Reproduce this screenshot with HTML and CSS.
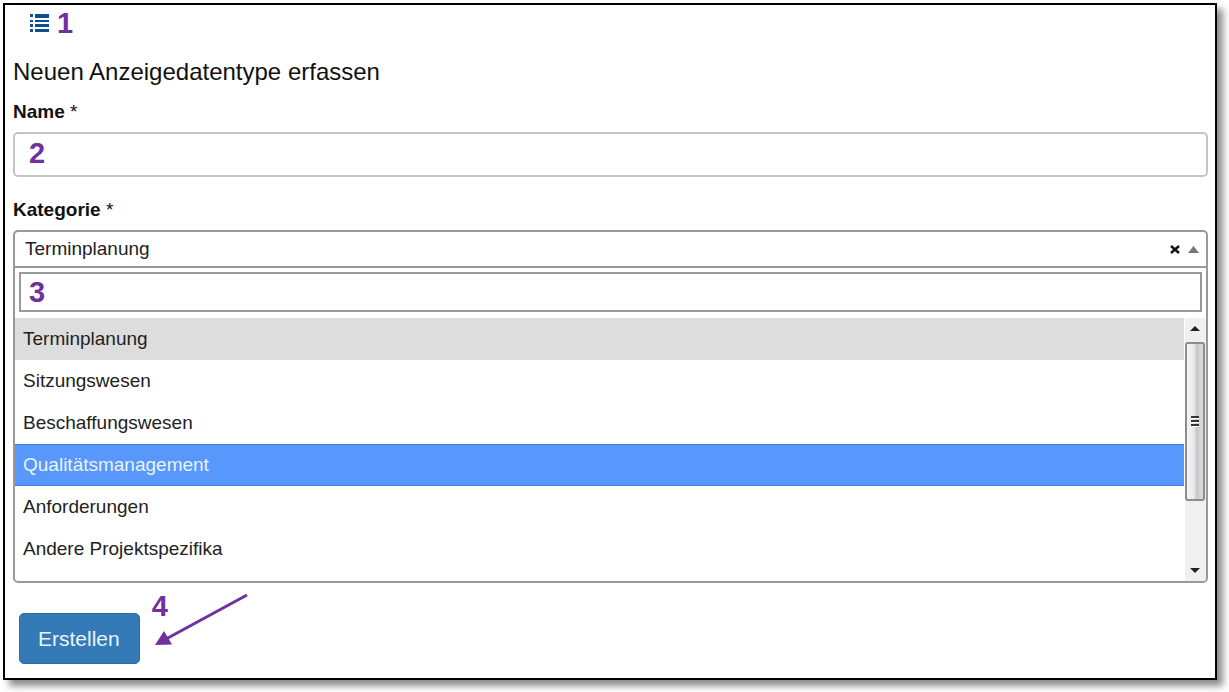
FILE: index.html
```html
<!DOCTYPE html>
<html lang="de">
<head>
<meta charset="utf-8">
<meta name="viewport" content="width=device-width, initial-scale=1">
<title>Neuen Anzeigedatentype erfassen</title>
<link rel="stylesheet" href="styles.css">
</head>
<body>
<div class="page">
<main class="frame">
  <div class="toolbar">
    <button class="list-button" type="button" aria-label="Liste">
      <svg width="20" height="18" viewBox="0 0 20 18" fill="#0d4f8f" aria-hidden="true">
        <path d="M0 0h3v3H0zM5 0h14v4H5zM0 6h3v2H0zM5 6h14v2H5zM0 10h3v3H0zM5 10h14v3H5zM0 15h3v3H0zM5 15h14v3H5z"/>
      </svg>
    </button>
    <span class="mark">1</span>
  </div>
  <h1 class="title">Neuen Anzeigedatentype erfassen</h1>
  <form class="form">
    <label class="label" for="name">Name <span class="required">*</span></label>
    <div class="field">
      <input class="text-input" id="name" type="text" required>
      <span class="mark mark-over">2</span>
    </div>

    <label class="label" for="category">Kategorie <span class="required">*</span></label>
    <div class="combo">
      <div class="combo-head">
        <select class="combo-select" id="category">
          <option selected>Terminplanung</option>
          <option>Sitzungswesen</option>
          <option>Beschaffungswesen</option>
          <option>Qualitätsmanagement</option>
          <option>Anforderungen</option>
          <option>Andere Projektspezifika</option>
        </select>
        <button class="clear" type="button" aria-label="Auswahl entfernen">
          <svg width="10" height="9" viewBox="0 0 10 9" aria-hidden="true"><path d="M1 1l8 7M9 1L1 8" fill="none" stroke="#111" stroke-width="2.500"/></svg>
        </button>
        <svg class="caret" width="11" height="7" viewBox="0 0 11 7" aria-hidden="true"><path d="M5.500 0L11 7H0z" fill="#777"/></svg>
      </div>
      <div class="search">
        <input class="search-input" type="search" aria-label="Kategorie suchen">
        <span class="mark mark-over">3</span>
      </div>
      <div class="results">
        <ul class="options" role="listbox" aria-label="Kategorie">
          <li class="option option-selected" role="option" aria-selected="true">Terminplanung</li>
          <li class="option" role="option">Sitzungswesen</li>
          <li class="option" role="option">Beschaffungswesen</li>
          <li class="option option-active" role="option">Qualitätsmanagement</li>
          <li class="option" role="option">Anforderungen</li>
          <li class="option" role="option">Andere Projektspezifika</li>
        </ul>
        <div class="scrollbar" aria-hidden="true">
          <svg class="scroll-arrow" width="20" height="24" viewBox="0 0 20 24"><path d="M10 8l5 5H5z" fill="#222"/></svg>
          <div class="thumb">
            <svg width="8" height="11" viewBox="0 0 8 11"><path d="M0 1h8M0 5h8M0 9h8" stroke="#333" stroke-width="2"/><path d="M1 2.500h7M1 6.500h7M1 10.500h7" stroke="#fff"/></svg>
          </div>
          <svg class="scroll-arrow scroll-down" width="20" height="24" viewBox="0 0 20 24"><path d="M5 11h10l-5 5z" fill="#222"/></svg>
        </div>
      </div>
    </div>

    <div class="actions">
      <button class="submit" type="submit">Erstellen</button>
      <span class="mark mark-step">4</span>
      <svg class="arrow" width="96" height="56" viewBox="152 592 96 56" aria-hidden="true">
        <path d="M247 595L166 639" stroke="#7030a0" stroke-width="3"/>
        <path d="M155 645L164 631L172 644.500Z" fill="#7030a0"/>
      </svg>
    </div>
  </form>
</main>
</div>
</body>
</html>
```
FILE: styles.css
```css
* {
  box-sizing: border-box;
}

body {
  margin: 0;
  background: #fff;
  color: #111;
  font: 19px/24px "Liberation Sans", Arial, sans-serif;
}

.page {
  min-height: 100vh;
  padding: 3px 12px 12px 3px;
  background: #fff;
}

.frame {
  padding: 4px 7px 14px 8px;
  border: 2px solid #000;
  background: #fff;
  box-shadow: 6px 6px 7px rgba(0, 0, 0, 0.45);
}

.toolbar {
  display: flex;
  align-items: center;
  gap: 7px;
  padding-left: 17px;
}

.list-button,
.clear {
  display: flex;
  padding: 0;
  border: 0;
  background: none;
}

.mark {
  color: #7030a0;
  font-size: 29px;
  font-weight: bold;
  line-height: 28px;
}

.title {
  margin: 19px 0 12px;
  font-size: 24px;
  font-weight: normal;
  line-height: 32px;
}

.label {
  display: block;
  margin-bottom: 8px;
  font-size: 19px;
  font-weight: bold;
}

.required {
  font-weight: normal;
}

.field {
  position: relative;
  margin-bottom: 21px;
}

.text-input,
.search-input {
  display: block;
  width: 100%;
  padding: 0 40px;
  background: #fff;
  font: inherit;
  outline: 0;
}

.text-input {
  height: 45px;
  border: 2px solid #c4c4c4;
  border-radius: 5px;
}

.mark-over {
  position: absolute;
  top: 7px;
  left: 16px;
}

.combo {
  border: 2px solid #999;
  border-radius: 5px;
  overflow: hidden;
}

.combo-head {
  display: flex;
  align-items: center;
  gap: 8px;
  height: 36px;
  padding: 0 7px 0 10px;
  border-bottom: 2px solid #999;
}

.combo-select {
  flex: 1;
  padding: 0;
  border: 0;
  appearance: none;
  background: none;
  color: #222;
  font: inherit;
  outline: 0;
}

.search {
  position: relative;
  padding: 4px 4px 6px;
}

.search-input {
  height: 40px;
  border: 2px solid #999;
  appearance: none;
}

.search .mark-over {
  left: 14px;
  top: 10px;
}

.results {
  display: flex;
  gap: 1px;
}

.options {
  flex: 1;
  margin: 0;
  padding: 0 0 11px;
  list-style: none;
}

.option {
  padding: 9px 8px;
  color: #222;
}

.option-selected {
  background: #ddd;
}

.option-active {
  background: #5897fb;
  box-shadow: inset 0 1px #3f7fdc, inset 0 -1px #3f7fdc;
  color: #e8f4ff;
}

.scrollbar {
  display: flex;
  flex-direction: column;
  width: 21px;
  background: #f0f0f0;
}

.scroll-down {
  margin-top: auto;
}

.thumb {
  display: flex;
  align-items: center;
  justify-content: center;
  width: 20px;
  height: 159px;
  border: 2px solid #8c8c8c;
  border-radius: 3px;
  background: linear-gradient(to right, #f5f5f5, #e8e8ea 45%, #c6c6cc 60%, #dcdce0);
}

.actions {
  display: flex;
  align-items: flex-start;
  padding: 9px 6px 0;
}

.submit {
  margin-top: 21px;
  padding: 12px 19px 12px 18px;
  border: 1px solid #2e6da4;
  border-radius: 5px;
  background: #337ab7;
  color: #e8f4ff;
  font: 21px/25px "Liberation Sans", Arial, sans-serif;
}

.mark-step {
  margin-left: 12px;
}

.arrow {
  margin-left: -16px;
}
```
